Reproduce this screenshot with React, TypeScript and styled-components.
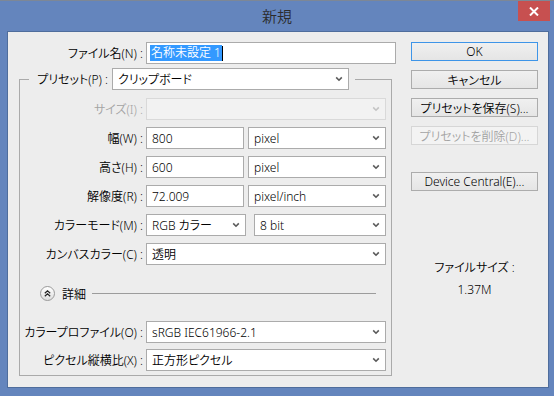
import React from 'react';
import styled, { createGlobalStyle } from 'styled-components';

const FONT = `"Noto Sans", "Noto Sans CJK JP", sans-serif`;

const Global = createGlobalStyle`
  html, body { margin: 0; padding: 0; }
  body { width: 554px; height: 396px; overflow: hidden; background: #6485bd; }
`;

const Window = styled.div`
  width: 554px;
  height: 396px;
  box-sizing: border-box;
  background: #6485bd;
  border-top: 1px solid #7d8796;
  display: flex;
  flex-direction: column;
  font-family: ${FONT};
  font-size: 12px;
  font-weight: 350;
  color: #000;
  font-feature-settings: "palt" 1;
`;

const TitleBar = styled.div`
  height: 30px;
  display: grid;
  grid-template-columns: 1fr auto 1fr;
  align-items: start;
`;

const Title = styled.div`
  grid-column: 2;
  font-size: 15px;
  line-height: 31px;
  color: #2b2b2b;
`;

const CloseButton = styled.div`
  grid-column: 3;
  justify-self: end;
  margin-right: 4px;
  width: 32px;
  height: 20px;
  background: #c75050;
  display: flex;
  align-items: center;
  justify-content: center;
`;

const Client = styled.div`
  margin: 0 5px 0 7px;
  height: 357px;
  box-sizing: border-box;
  border: 1px solid #4f6d9c;
  background: #ededed;
  display: flex;
  padding-top: 10px;
`;

const Main = styled.div`
  width: 388px;
  display: flex;
  flex-direction: column;
`;

const Row = styled.div<{ $label: number }>`
  display: grid;
  grid-template-columns: ${(p) => p.$label}px auto;
  column-gap: 3px;
  align-items: center;
`;

const Label = styled.div<{ $disabled?: boolean }>`
  text-align: right;
  white-space: nowrap;
  color: ${(p) => (p.$disabled ? '#a3a3a3' : '#000')};
`;

const Controls = styled.div`
  display: flex;
  align-items: center;
`;

const TextBox = styled.div<{ $w: number; $gap?: number }>`
  width: ${(p) => p.$w}px;
  margin-right: ${(p) => p.$gap ?? 0}px;
  height: 22px;
  box-sizing: border-box;
  border: 1px solid #ababab;
  background: #fff;
  padding-left: 5px;
  display: flex;
  align-items: center;
  white-space: nowrap;
`;

const NameBox = styled(TextBox)`
  padding-left: 3px;
`;

const Selected = styled.span`
  background: #3399ff;
  color: #fff;
  line-height: 16px;
  padding: 0 1px;
`;

const Caret = styled.span`
  width: 1px;
  height: 15px;
  background: #000;
`;

const SelectBox = styled.div<{ $w: number; $gap?: number; $disabled?: boolean }>`
  width: ${(p) => p.$w}px;
  margin-right: ${(p) => p.$gap ?? 0}px;
  height: 22px;
  box-sizing: border-box;
  border: 1px solid ${(p) => (p.$disabled ? '#d9d9d9' : '#ababab')};
  background: ${(p) => (p.$disabled ? '#f2f2f2' : '#fff')};
  padding: 0 5px 0 5px;
  display: flex;
  align-items: center;
  justify-content: space-between;
  white-space: nowrap;
`;

const Fieldset = styled.fieldset`
  margin: 4px 0 0 11px;
  padding: 0;
  width: 373px;
  box-sizing: border-box;
  border: 1px solid #aaaaaa;
  min-inline-size: auto;
`;

const Legend = styled.legend`
  margin-left: 9px;
  padding: 0 6px 0 0;
`;

const LegendInner = styled.div`
  display: flex;
  align-items: center;
  gap: 4px;
`;

const LegendLabel = styled(Label)`
  width: 79px;
`;

const FieldBody = styled.div`
  display: flex;
  flex-direction: column;
  padding: 8px 0 4px 0;
`;

const Stack = styled.div<{ $gap: number }>`
  display: flex;
  flex-direction: column;
  gap: ${(p) => p.$gap}px;
`;

const DetailRow = styled.div`
  display: flex;
  align-items: center;
  height: 15px;
  margin: 21px 15px 20px 20px;
`;

const Toggle = styled.div`
  width: 15px;
  height: 15px;
  box-sizing: border-box;
  border-radius: 50%;
  border: 1px solid #9a9a9a;
  background: linear-gradient(#ffffff, #dedede);
  display: flex;
  align-items: center;
  justify-content: center;
  margin-right: 7px;
`;

const DetailText = styled.span`
  white-space: nowrap;
`;

const Rule = styled.div`
  flex: 1;
  height: 1px;
  background: #9c9c9c;
  margin-left: 6px;
`;

const Side = styled.div`
  width: 127px;
  margin-left: 15px;
  display: flex;
  flex-direction: column;
`;

const Button = styled.div<{ $default?: boolean; $disabled?: boolean; $mt?: number }>`
  height: 19px;
  box-sizing: border-box;
  margin-top: ${(p) => p.$mt ?? 0}px;
  border: 1px solid
    ${(p) => (p.$default ? '#3e95e8' : p.$disabled ? '#d6d6d6' : '#acacac')};
  background: ${(p) => (p.$disabled ? '#f3f3f3' : 'linear-gradient(#f0f0f0, #e5e5e5)')};
  color: ${(p) => (p.$disabled ? '#a3a3a3' : '#000')};
  display: flex;
  align-items: center;
  justify-content: center;
  white-space: nowrap;
`;

const FileSize = styled.div`
  margin-top: 67px;
  display: flex;
  flex-direction: column;
  align-items: center;
  gap: 5px;
`;

const Chevron = ({ disabled }: { disabled?: boolean }) => (
  <svg width="8" height="6" viewBox="0 0 8 6">
    <path
      d="M1.2 1.4 L4 4.2 L6.8 1.4"
      fill="none"
      stroke={disabled ? '#c4c4c4' : '#5a5a5a'}
      strokeWidth="1.6"
    />
  </svg>
);

const Select = ({
  w,
  gap,
  disabled,
  children,
}: {
  w: number;
  gap?: number;
  disabled?: boolean;
  children?: React.ReactNode;
}) => (
  <SelectBox $w={w} $gap={gap} $disabled={disabled}>
    <span>{children}</span>
    <Chevron disabled={disabled} />
  </SelectBox>
);

const INNER = 123;

export default function App() {
  return (
    <>
      <Global />
      <Window>
        <TitleBar>
          <Title>新規</Title>
          <CloseButton>
            <svg width="10" height="9" viewBox="0 0 10 9">
              <path d="M1 0.5 L9 8.5 M9 0.5 L1 8.5" stroke="#fff" strokeWidth="2" />
            </svg>
          </CloseButton>
        </TitleBar>
        <Client>
          <Main>
            <Row $label={135}>
              <Label>ファイル名(N) :</Label>
              <Controls>
                <NameBox $w={250}>
                  <Selected>名称未設定 1</Selected>
                  <Caret />
                </NameBox>
              </Controls>
            </Row>
            <Fieldset>
              <Legend>
                <LegendInner>
                  <LegendLabel>プリセット(P) :</LegendLabel>
                  <Select w={237}>クリップボード</Select>
                </LegendInner>
              </Legend>
              <FieldBody>
                <Stack $gap={7}>
                  <Row $label={INNER}>
                    <Label $disabled>サイズ(I) :</Label>
                    <Controls>
                      <Select w={240} disabled />
                    </Controls>
                  </Row>
                  <Row $label={INNER}>
                    <Label>幅(W) :</Label>
                    <Controls>
                      <TextBox $w={98} $gap={4}>800</TextBox>
                      <Select w={138}>pixel</Select>
                    </Controls>
                  </Row>
                  <Row $label={INNER}>
                    <Label>高さ(H) :</Label>
                    <Controls>
                      <TextBox $w={98} $gap={4}>600</TextBox>
                      <Select w={138}>pixel</Select>
                    </Controls>
                  </Row>
                  <Row $label={INNER}>
                    <Label>解像度(R) :</Label>
                    <Controls>
                      <TextBox $w={98} $gap={4}>72.009</TextBox>
                      <Select w={138}>pixel/inch</Select>
                    </Controls>
                  </Row>
                  <Row $label={INNER}>
                    <Label>カラーモード(M) :</Label>
                    <Controls>
                      <Select w={100} gap={8}>RGB カラー</Select>
                      <Select w={132}>8 bit</Select>
                    </Controls>
                  </Row>
                  <Row $label={INNER}>
                    <Label>カンバスカラー(C) :</Label>
                    <Controls>
                      <Select w={240}>透明</Select>
                    </Controls>
                  </Row>
                </Stack>
                <DetailRow>
                  <Toggle>
                    <svg width="7" height="7" viewBox="0 0 7 7">
                      <path
                        d="M0.8 3.2 L3.5 0.8 L6.2 3.2 M0.8 6.2 L3.5 3.8 L6.2 6.2"
                        fill="none"
                        stroke="#222"
                        strokeWidth="1.2"
                      />
                    </svg>
                  </Toggle>
                  <DetailText>詳細</DetailText>
                  <Rule />
                </DetailRow>
                <Stack $gap={6}>
                  <Row $label={INNER}>
                    <Label>カラープロファイル(O) :</Label>
                    <Controls>
                      <Select w={240}>sRGB IEC61966-2.1</Select>
                    </Controls>
                  </Row>
                  <Row $label={INNER}>
                    <Label>ピクセル縦横比(X) :</Label>
                    <Controls>
                      <Select w={240}>正方形ピクセル</Select>
                    </Controls>
                  </Row>
                </Stack>
              </FieldBody>
            </Fieldset>
          </Main>
          <Side>
            <Button $default>OK</Button>
            <Button $mt={9}>キャンセル</Button>
            <Button $mt={9}>プリセットを保存(S)...</Button>
            <Button $mt={9} $disabled>
              プリセットを削除(D)...
            </Button>
            <Button $mt={27}>Device Central(E)...</Button>
            <FileSize>
              <span>ファイルサイズ :</span>
              <span>1.37M</span>
            </FileSize>
          </Side>
        </Client>
      </Window>
    </>
  );
}
